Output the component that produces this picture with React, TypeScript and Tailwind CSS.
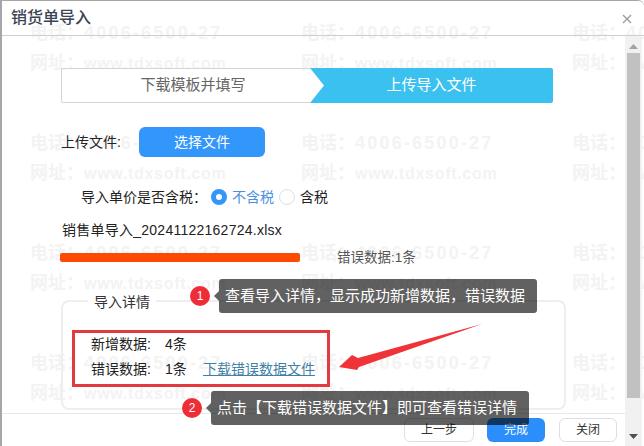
const FONT = "font-['Liberation_Sans','Noto_Sans_CJK_SC',sans-serif]"

const WATERMARK_ROWS = [0, 1, 2, 3]
const WATERMARK_COLS = [0, 1, 2]

function Watermark() {
  return (
    <div className="absolute left-[28px] top-[17px] grid grid-cols-[271px_271px_271px] auto-rows-[110px] pointer-events-none">
      {WATERMARK_ROWS.map((r) =>
        WATERMARK_COLS.map((c) => (
          <div key={`${r}-${c}`} className="text-[18px] leading-[30px] font-bold text-[#f3f3f3] whitespace-nowrap">
            <p>电话：<span className="tracking-[2.2px]">4006-6500-27</span></p>
            <p>网址：<span className="text-[16px] tracking-[0.7px]">www.tdxsoft.com</span></p>
          </div>
        ))
      )}
    </div>
  )
}

function Callout({ n, text, className }: { n: number; text: string; className: string }) {
  return (
    <div className={`absolute flex items-center ${className}`}>
      <span className="w-5 h-5 rounded-full bg-[#ee2d36] text-white text-[12px] flex items-center justify-center shrink-0">{n}</span>
      <span className="ml-[4px] w-0 h-0 border-y-[5px] border-y-transparent border-r-[5px] border-r-[#616161]" />
      <span className="h-[34px] bg-black/[0.62] text-white text-[15px] rounded-[3px] pl-[6px] pr-[12px] flex items-center whitespace-nowrap">{text}</span>
    </div>
  )
}

export default function App() {
  return (
    <div className={`${FONT} relative w-[644px] h-[446px] overflow-hidden bg-white border-l-2 border-t border-[#a6a6a6] rounded-tr-[6px] flex flex-col text-[#333]`}>
      <Watermark />

      <div className="relative h-[35px] shrink-0 border-b border-[#cfcfcf] flex items-center justify-between pl-[9px] pr-[12px]">
        <h1 className="text-[16px] text-[#3c4353] font-medium">销货单导入</h1>
        <svg width="10" height="10" viewBox="0 0 10 10" className="text-[#9a9a9a] mt-[1px]">
          <path d="M1 1l8 8M9 1l-8 8" stroke="currentColor" strokeWidth="1.3" />
        </svg>
      </div>

      <div className="relative flex-1 min-h-0 flex">
        <div className="flex-1 min-w-0 flex flex-col">
          <div className="flex-1 min-h-0 pl-[59px] pr-[71px] pt-[32px]">
            <div className="flex h-[35px] w-[492px]">
              <div className="w-[249px] border border-[#d5d5d5] border-r-0 rounded-l-[2px] flex items-center justify-center text-[15px] text-[#666] pl-[14px]">
                下载模板并填写
              </div>
              <div className="relative flex-1 bg-[#3bc1ef] rounded-r-[2px] flex items-center justify-center text-[15px] text-white">
                <svg width="14" height="35" viewBox="0 0 14 35" className="absolute left-0 top-0">
                  <path d="M0 0L14 17.5L0 35Z" fill="#ffffff" />
                </svg>
                上传导入文件
              </div>
            </div>

            <div className="flex items-center mt-[24px] h-[30px]">
              <span className="text-[14px] text-[#222] w-[78px]">上传文件:</span>
              <button className="w-[126px] h-[30px] rounded-[6px] bg-[#3396fb] text-white text-[14px]">选择文件</button>
            </div>

            <div className="flex items-center mt-[28px] ml-[20px] h-[24px] text-[14px]">
              <span className="text-[#222]">导入单价是否含税：</span>
              <span className="ml-[4px] w-4 h-4 rounded-full border-[5px] border-[#3396fb] bg-white" />
              <span className="ml-[5px] text-[#4a90e2]">不含税</span>
              <span className="ml-[5px] w-4 h-4 rounded-full border border-[#d7dfe9] bg-white" />
              <span className="ml-[5px] text-[#222]">含税</span>
            </div>

            <p className="mt-[11px] ml-[1px] text-[14px] tracking-[0.25px] text-[#222] leading-[20px]">销售单导入_20241122162724.xlsx</p>

            <div className="flex mt-[13px] h-[9px] -ml-[1px]">
              <div className="w-[240px] h-[9px] rounded-[2px] bg-[#fe4a00]" />
              <span className="ml-[37px] mt-[-5px] text-[13.5px] leading-[20px] text-[#555] whitespace-nowrap">错误数据:1条</span>
            </div>

            <fieldset className="mt-[26px] w-[505px] h-[122px] border-2 border-[#eeeeee] rounded-[8px] pl-[25px]">
              <legend className="px-[6px] pt-[4px] text-[14px] text-[#333]">导入详情</legend>
            </fieldset>
          </div>

          <div className="h-[33px] shrink-0 border-t border-[#e8e8e8] flex items-center justify-end gap-[13px] pr-[8px] text-[12px]">
            <button className="w-[70px] h-[24px] rounded-[6px] border border-[#dcdfe6] text-[#333] ml-auto">上一步</button>
            <button className="w-[58px] h-[24px] rounded-[6px] bg-[#2b8efb] text-white">完成</button>
            <button className="w-[58px] h-[24px] rounded-[6px] border border-[#dcdfe6] text-[#333] ml-[1px]">关闭</button>
          </div>
        </div>

        <div className="w-[17px] shrink-0 bg-[#f1f1f1] mr-[2px] flex flex-col items-center">
          <svg width="9" height="5" viewBox="0 0 9 5" className="mt-[8px] shrink-0"><path d="M0 5L4.5 0L9 5Z" fill="#a3a3a3" /></svg>
          <div className="w-[13px] h-[345px] bg-[#c1c1c1] mt-[4px]" />
          <svg width="9" height="5" viewBox="0 0 9 5" className="mt-[36px] shrink-0"><path d="M0 0L4.5 5L9 0Z" fill="#505050" /></svg>
        </div>
      </div>

      <div className="absolute left-[70px] top-[329px] w-[258px] h-[57px] border-[3px] border-[#e23a3e] pl-[16px] flex flex-col gap-[1px] text-[14px] text-[#222] leading-[24px]">
        <div className="flex -mt-[1px]">
          <span className="w-[74px]">新增数据:</span>
          <span>4条</span>
        </div>
        <div className="flex">
          <span className="w-[74px]">错误数据:</span>
          <span className="w-[38px]">1条</span>
          <a className="text-[#417fa8] underline">下载错误数据文件</a>
        </div>
      </div>

      <svg width="146" height="48" viewBox="0 0 146 48" className="absolute left-[335px] top-[322px]">
        <path d="M145 1L21 35L15 32L2 44L20 47L22 44Z" fill="#f03338" />
      </svg>

      <Callout n={1} text="查看导入详情，显示成功新增数据，错误数据" className="left-[188px] top-[278px]" />
      <Callout n={2} text="点击【下载错误数据文件】即可查看错误详情" className="left-[180px] top-[390px]" />
    </div>
  )
}
